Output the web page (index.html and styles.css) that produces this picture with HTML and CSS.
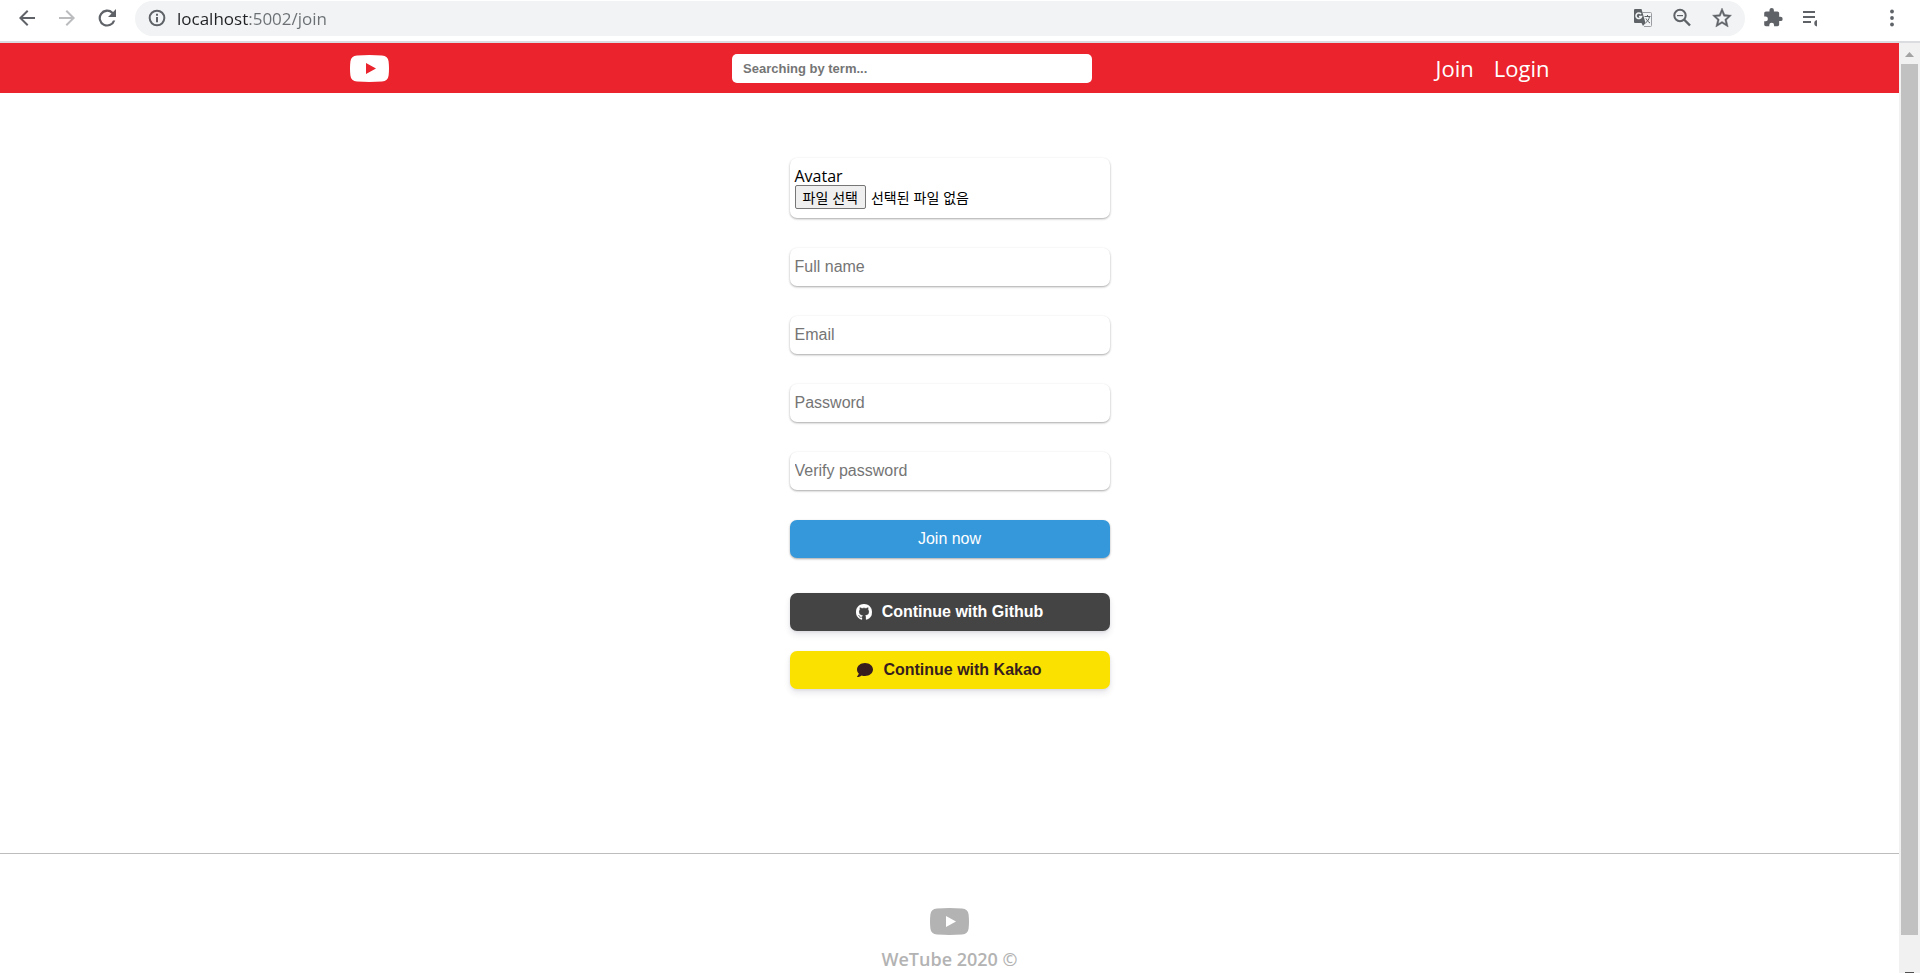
FILE: index.html
```html
<!DOCTYPE html>
<html lang="ko">
<head>
    <meta charset="UTF-8">
    <meta name="viewport" content="width=device-width, initial-scale=1.0">
    <title>Join | WeTube</title>
    <link rel="stylesheet" href="styles.css">
</head>
<body>
    <div class="toolbar">
        <div class="nav-buttons">
            <button class="icon-btn" type="button" aria-label="Back">
                <svg width="24" height="24" viewBox="0 0 24 24"><path d="M20 11H7.83l5.59-5.59L12 4l-8 8 8 8 1.41-1.41L7.83 13H20v-2z"/></svg>
            </button>
            <button class="icon-btn disabled" type="button" aria-label="Forward">
                <svg width="24" height="24" viewBox="0 0 24 24"><path d="M12 4l-1.41 1.41L16.17 11H4v2h12.17l-5.58 5.59L12 20l8-8z"/></svg>
            </button>
            <button class="icon-btn" type="button" aria-label="Reload">
                <svg width="24" height="24" viewBox="0 0 24 24"><path d="M18.1 6A8.500 8.500 0 1 0 20.300 14.500h-2.300a6.300 6.300 0 1 1-1.500-6.900L13 11h8V3z"/></svg>
            </button>
        </div>
        <div class="address-bar">
            <button class="icon-btn" type="button" aria-label="Site information">
                <svg width="20" height="20" viewBox="0 0 24 24">
                    <circle cx="12" cy="12" r="8.800" fill="none" stroke="#5f6368" stroke-width="2.400"/>
                    <path d="M10.800 10.800h2.400V17h-2.400zM10.800 7h2.400v2.400h-2.400z"/>
                </svg>
            </button>
            <input class="address" type="text" value="localhost:5002/join" aria-label="Address">
            <div class="address-actions">
                <button class="icon-btn" type="button" aria-label="Translate">
                    <svg width="20" height="20" viewBox="0 0 20 20">
                        <path d="M9.500 4.500h8a1 1 0 0 1 1 1v12a1 1 0 0 1-1 1h-6.500" fill="none" stroke="#9a9da1"/>
                        <path d="M2 1h6.500l4 14H2a1 1 0 0 1-1-1V2a1 1 0 0 1 1-1z"/>
                        <path d="M8.500 15h4l-2.500 3z"/>
                        <path d="M8 6A2.800 2.800 0 1 0 8.500 8.500H6" fill="none" stroke="#f1f3f4" stroke-width="1.600"/>
                        <path d="M11.500 8.500h6M14.500 7v1.500M16.500 8.500c-.5 3-2 5-4 6.500M13 10.500c1 2 2.500 3.500 4 4.500" fill="none" stroke="#5f6368"/>
                    </svg>
                </button>
                <button class="icon-btn" type="button" aria-label="Zoom">
                    <svg width="22" height="22" viewBox="0 0 22 22">
                        <circle cx="9" cy="8.500" r="5.700" fill="none" stroke="#5f6368" stroke-width="2"/>
                        <path d="M13 12.500l6 6" fill="none" stroke="#5f6368" stroke-width="2.400"/>
                        <path d="M6 8h6v1.200H6z"/>
                    </svg>
                </button>
                <button class="icon-btn" type="button" aria-label="Bookmark">
                    <svg width="22" height="22" viewBox="1 1 22 22"><path d="M21.500 9.240l-6.690-.62L12 2 9.190 8.630 2.500 9.240l5 4.730L5.820 21 12 17.270 18.180 21l-1.630-7.030 4.950-4.730zM12 15.400l-3.760 2.270 1-4.280-3.320-2.880 4.380-.38L12 6.100l1.710 4.040 4.380.38-3.320 2.880 1 4.280L12 15.400z" stroke="#5f6368" stroke-width=".4"/></svg>
                </button>
            </div>
        </div>
        <div class="extension-buttons">
            <button class="icon-btn" type="button" aria-label="Extensions">
                <svg width="22" height="22" viewBox="-.5 0 25 25"><path d="M20.500 11H19V7c0-1.100-.9-2-2-2h-4V3.500a2.500 2.500 0 0 0-5 0V5H4c-1.100 0-2 .9-2 2v3.800h1.500a2.700 2.700 0 0 1 0 5.400H2V20c0 1.100.9 2 2 2h3.800v-1.500a2.700 2.700 0 0 1 5.400 0V22H17c1.100 0 2-.9 2-2v-4h1.500a2.500 2.500 0 0 0 0-5z"/></svg>
            </button>
            <button class="icon-btn" type="button" aria-label="Media">
                <svg width="16" height="18" viewBox="0 0 16 18"><path d="M1 2h12v2H1zM1 7h12v2H1zM1 12h8v2H1zM15 11v6.500a3.300 3.300 0 0 1 0-6.500z"/></svg>
            </button>
        </div>
        <button class="icon-btn menu-btn" type="button" aria-label="Menu">
            <svg width="24" height="24" viewBox="0 0 24 24"><circle cx="12" cy="5.500" r="1.900"/><circle cx="12" cy="12" r="1.900"/><circle cx="12" cy="18.500" r="1.900"/></svg>
        </button>
    </div>

    <div class="viewport">
        <div class="page">
            <header class="header">
                <div class="header-wrapper">
                    <a class="logo" href="#" aria-label="WeTube">
                        <svg width="39" height="27" viewBox="0 0 39 27"><path d="M7 .4Q19.500-.4 32 .4q6 .4 6.600 6 .8 7.100 0 14.200-.6 5.600-6.600 6-12.500.8-25 0-6-.4-6.600-6-.8-7.100 0-14.200Q1 .8 7 .4zM16 8v11l10-5.500z" fill-rule="evenodd"/></svg>
                    </a>
                    <form class="search">
                        <input class="search-input" type="text" placeholder="Searching by term..." aria-label="Search">
                    </form>
                    <nav class="header-links">
                        <a href="#">Join</a>
                        <a href="#">Login</a>
                    </nav>
                </div>
            </header>

            <main class="main">
                <form class="join-form">
                    <div class="file-upload">
                        <label for="avatar">Avatar</label>
                        <div class="file-row">
                            <span class="file-btn">파일 선택</span>
                            <span class="file-name">선택된 파일 없음</span>
                            <input class="file-input" type="file" id="avatar" accept="image/*">
                        </div>
                    </div>
                    <input class="field" type="text" placeholder="Full name" aria-label="Full name">
                    <input class="field" type="email" placeholder="Email" aria-label="Email">
                    <input class="field" type="password" placeholder="Password" aria-label="Password">
                    <input class="field" type="password" placeholder="Verify password" aria-label="Verify password">
                    <button class="submit-btn" type="submit">Join now</button>
                </form>
                <div class="social-login">
                    <button class="social-btn github" type="button">
                        <svg width="16" height="16" viewBox="0 0 16 16"><path d="M8 0C3.580 0 0 3.580 0 8c0 3.540 2.290 6.530 5.470 7.590.4.070.55-.17.55-.38 0-.19-.01-.82-.01-1.490-2.010.37-2.530-.49-2.690-.94-.09-.23-.48-.94-.82-1.130-.28-.15-.68-.52-.01-.53.63-.01 1.080.58 1.230.82.72 1.210 1.870.87 2.330.66.070-.52.28-.87.51-1.070-1.780-.2-3.640-.89-3.640-3.950 0-.87.31-1.590.82-2.150-.08-.2-.36-1.020.08-2.120 0 0 .67-.21 2.200.82.64-.18 1.320-.27 2-.27s1.360.09 2 .27c1.530-1.040 2.200-.82 2.200-.82.44 1.100.16 1.920.08 2.120.51.56.82 1.270.82 2.150 0 3.070-1.870 3.750-3.650 3.950.29.25.54.73.54 1.480 0 1.070-.01 1.930-.01 2.200 0 .21.15.46.55.38A8.010 8.010 0 0 0 16 8c0-4.420-3.580-8-8-8z" stroke="#fff" stroke-width=".3"/></svg>
                        Continue with Github
                    </button>
                    <button class="social-btn kakao" type="button">
                        <svg width="16" height="16" viewBox="0 0 512 512"><path d="M256 32C114.600 32 0 125.100 0 240c0 49.600 21.400 95 57 130.700C44.500 421.100 2.700 466 2.200 466.500c-2.200 2.300-2.800 5.700-1.500 8.700S4.800 480 8 480c66.300 0 116-31.800 140.600-51.400 32.700 12.300 69 19.400 107.400 19.400 141.400 0 256-93.100 256-208S397.400 32 256 32z"/></svg>
                        Continue with Kakao
                    </button>
                </div>
            </main>

            <footer class="footer">
                <svg width="39" height="27" viewBox="0 0 39 27"><path d="M7 .4Q19.500-.4 32 .4q6 .4 6.600 6 .8 7.100 0 14.200-.6 5.600-6.600 6-12.500.8-25 0-6-.4-6.600-6-.8-7.100 0-14.200Q1 .8 7 .4zM16 8v11l10-5.500z" fill-rule="evenodd"/></svg>
                <span class="footer-text">WeTube 2020 &copy;</span>
            </footer>
        </div>

        <div class="scrollbar">
            <svg class="scroll-arrow" width="21" height="21" viewBox="0 0 21 21"><path d="M6 14l4.500-5 4.500 5z" fill="#a3a3a3"/></svg>
            <div class="scroll-thumb"></div>
            <svg class="scroll-arrow scroll-down" width="21" height="9" viewBox="0 0 21 9"><path d="M6 8h9v1H6z" fill="#505050"/></svg>
        </div>
    </div>
</body>
</html>
```

FILE: styles.css
```css
* {
    box-sizing: border-box;
}

body {
    margin: 0;
    height: 100vh;
    display: flex;
    flex-direction: column;
    overflow: hidden;
    background-color: #fff;
    color: #000;
    font-family: "Open Sans", "Noto Sans CJK KR", sans-serif;
    font-size: 16px;
}

svg {
    display: block;
    flex: none;
}

a {
    color: inherit;
    text-decoration: none;
}

input,
button {
    font-family: "Liberation Sans", Arial, sans-serif;
    font-size: 16px;
}

/* Browser toolbar */
.toolbar {
    display: flex;
    align-items: center;
    flex: none;
    height: 43px;
    padding: 1px 16px 6px 15px;
    border-bottom: 2px solid #dadce0;
}

.icon-btn {
    padding: 0;
    border: none;
    background: none;
    cursor: pointer;
}

.icon-btn svg {
    fill: #5f6368;
}

.icon-btn.disabled svg {
    fill: #babcbe;
}

.nav-buttons {
    display: flex;
    gap: 16px;
}

.address-bar {
    display: flex;
    align-items: center;
    flex: 1;
    height: 35px;
    margin-left: 16px;
    padding: 0 12px;
    background: #f1f3f4;
    border-radius: 18px;
}

.address {
    flex: 1;
    min-width: 0;
    margin-left: 10px;
    padding: 0;
    border: none;
    outline: none;
    font-family: "Open Sans", sans-serif;
    font-size: 17px;
    background: linear-gradient(90deg, #202124 72px, #6b6f73 72px);
    -webkit-background-clip: text;
    background-clip: text;
    color: transparent;
}

.address-actions {
    display: flex;
    align-items: center;
    gap: 18px;
}

.extension-buttons {
    display: flex;
    align-items: center;
    gap: 18px;
    margin-left: 17px;
}

.menu-btn {
    margin-left: 62px;
}

/* Page and scrollbar */
.viewport {
    display: flex;
    flex: 1;
    min-height: 0;
}

.page {
    flex: 1;
    overflow: hidden;
}

.scrollbar {
    display: flex;
    flex-direction: column;
    flex: none;
    width: 21px;
    background: #f1f1f1;
}

.scroll-thumb {
    flex: none;
    height: calc(100% - 59px);
    margin: 0 2px;
    background: #c1c1c1;
}

.scroll-down {
    margin-top: auto;
}

/* Header */
.header {
    display: flex;
    justify-content: center;
    background: #ea232c;
    color: #fff;
}

.header-wrapper {
    display: flex;
    align-items: center;
    justify-content: space-between;
    width: 100%;
    max-width: 1200px;
    height: 50px;
}

.logo svg {
    fill: #fff;
}

.search {
    width: 30%;
}

.search-input {
    display: block;
    width: 100%;
    height: 29px;
    padding: 0 11px;
    border: none;
    border-radius: 5px;
    font-size: 13px;
    font-weight: bold;
}

.header-links {
    display: flex;
    gap: 20px;
    font-size: 22px;
}

/* Join form */
.main {
    display: flex;
    flex-direction: column;
    align-items: center;
    padding: 65px 0 164px;
}

.join-form,
.social-login {
    display: flex;
    flex-direction: column;
    width: 100%;
    max-width: 320px;
}

.join-form {
    gap: 30px;
}

.file-upload,
.field,
.submit-btn {
    border: none;
    border-radius: 7px;
    box-shadow: 0 1px 3px rgba(0, 0, 0, 0.12), 0 1px 2px rgba(0, 0, 0, 0.24);
}

.file-upload {
    padding: 9px 5px 9px;
    line-height: 18px;
}

.file-upload label {
    display: block;
}

.file-row {
    display: flex;
    align-items: center;
    gap: 5px;
    position: relative;
    font-family: "Noto Sans CJK KR", sans-serif;
    font-size: 14px;
}

.file-btn {
    height: 24px;
    padding: 2px 7px;
    border: 1px solid #767676;
    border-radius: 2px;
    background: #efefef;
}

/* the native control lies transparent over the Korean captions */
.file-input {
    position: absolute;
    inset: 0;
    width: 100%;
    opacity: 0;
    cursor: pointer;
}

.field {
    height: 38px;
    padding: 0 5px;
    background: #fff;
}

.field::placeholder,
.search-input::placeholder {
    color: #757575;
}

.submit-btn {
    height: 38px;
    background: #3498db;
    color: #fff;
    cursor: pointer;
}

.social-login {
    gap: 20px;
    margin-top: 35px;
}

.social-btn {
    display: flex;
    align-items: center;
    justify-content: center;
    gap: 10px;
    height: 38px;
    border: none;
    border-radius: 7px;
    box-shadow: 0 4px 6px rgba(50, 50, 93, 0.11), 0 1px 3px rgba(0, 0, 0, 0.08);
    font-weight: bold;
    cursor: pointer;
}

.social-btn svg {
    fill: currentColor;
}

.github {
    background: #444;
    color: #fff;
}

.kakao {
    background: #fae100;
    color: #371d1e;
}

/* Footer */
.footer {
    display: flex;
    flex-direction: column;
    align-items: center;
    gap: 12px;
    padding: 54px 0;
    border-top: 1px solid #bdbdbd;
    color: #b3b3b3;
}

.footer svg {
    fill: #b3b3b3;
}

.footer-text {
    font-size: 18px;
    font-weight: 600;
    line-height: 24px;
}
```
